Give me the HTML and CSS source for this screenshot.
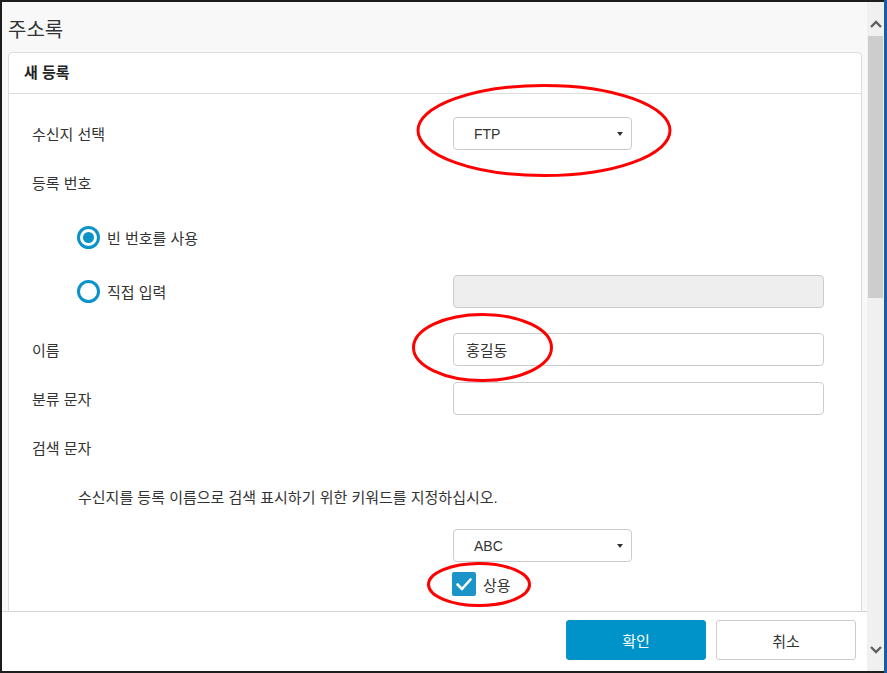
FILE: index.html
```html
<!DOCTYPE html>
<html lang="ko">
<head>
    <meta charset="UTF-8">
    <title>주소록</title>
    <link rel="stylesheet" href="styles.css">
</head>
<body>
    <div class="desktop">
        <div class="window">
            <div class="dialog-main">
                <div class="dialog-title">주소록</div>
                <div class="dialog-body">
                    <div class="card">
                        <div class="card-header">새 등록</div>
                        <div class="card-body">
                            <div class="form-row">
                                <div class="form-label">수신지 선택</div>
                                <div class="select">FTP<span class="caret"></span></div>
                            </div>
                            <div class="form-row">
                                <div class="form-label">등록 번호</div>
                            </div>
                            <div class="radio-group">
                                <div class="form-row">
                                    <div class="form-label radio-option">
                                        <span class="radio checked"></span>빈 번호를 사용
                                    </div>
                                </div>
                                <div class="form-row">
                                    <div class="form-label radio-option">
                                        <span class="radio"></span>직접 입력
                                    </div>
                                    <input class="field" type="text" disabled>
                                </div>
                            </div>
                            <div class="form-row">
                                <div class="form-label">이름</div>
                                <input class="field" type="text" value="홍길동">
                            </div>
                            <div class="form-row">
                                <div class="form-label">분류 문자</div>
                                <input class="field" type="text">
                            </div>
                            <div class="form-row">
                                <div class="form-label">검색 문자</div>
                            </div>
                            <div class="form-row">
                                <div class="form-hint">수신지를 등록 이름으로 검색 표시하기 위한 키워드를 지정하십시오.</div>
                            </div>
                            <div class="form-row tight">
                                <div class="form-label"></div>
                                <div class="select">ABC<span class="caret"></span></div>
                            </div>
                            <div class="form-row check-row">
                                <div class="form-label"></div>
                                <span class="checkbox">
                                    <svg width="24" height="24" viewBox="0 0 24 24"><polyline points="5.5,12.5 10,17 18.5,7.5" fill="none" stroke="#fff" stroke-width="2.6" stroke-linecap="round" stroke-linejoin="round"/></svg>
                                </span>
                                <span class="check-label">상용</span>
                            </div>
                        </div>
                    </div>
                </div>
                <div class="dialog-footer">
                    <button class="btn btn-primary">확인</button>
                    <button class="btn btn-default">취소</button>
                </div>
            </div>
            <div class="scrollbar">
                <div class="scroll-btn up">
                    <svg width="12" height="8" viewBox="0 0 12 8"><polyline points="1,7 6,2 11,7" fill="none" stroke="#5f5f5f" stroke-width="2.4"/></svg>
                </div>
                <div class="scroll-track">
                    <div class="scroll-thumb"></div>
                </div>
                <div class="scroll-btn down">
                    <svg width="12" height="8" viewBox="0 0 12 8"><polyline points="1,1 6,6 11,1" fill="none" stroke="#5f5f5f" stroke-width="2.4"/></svg>
                </div>
            </div>
        </div>
        <svg class="marks" width="887" height="673" viewBox="0 0 887 673">
            <ellipse cx="544" cy="130.5" rx="126" ry="45" fill="none" stroke="#f00" stroke-width="3"/>
            <ellipse cx="482.5" cy="347.5" rx="69" ry="33" fill="none" stroke="#f00" stroke-width="3"/>
            <ellipse cx="479" cy="584.5" rx="50.5" ry="21" fill="none" stroke="#f00" stroke-width="3"/>
        </svg>
    </div>
</body>
</html>
```

FILE: styles.css
```css
body {
    margin: 0;
    background: #1d1d1d;
    font-family: "Liberation Sans", "Noto Sans CJK KR", sans-serif;
    color: #333;
}
.desktop {
    position: relative;
    width: 887px;
    height: 673px;
    overflow: hidden;
    background: linear-gradient(to right, #1d1d1d 884px, #1a5d9e 884px);
}
.window {
    display: flex;
    width: 882px;
    height: 669px;
    margin: 2px 0 0 2px;
    background: #f8f8f8;
}
.dialog-main {
    width: 865px;
    display: flex;
    flex-direction: column;
}
.dialog-title {
    height: 50px;
    box-sizing: border-box;
    padding: 18px 6px 0 6px;
    font-size: 20px;
    line-height: 20px;
    color: #333;
}
.dialog-body {
    flex: 1;
    overflow: hidden;
    padding: 0 5px 0 6px;
}
.card {
    background: #fff;
    border: 1px solid #ddd;
    border-radius: 4px;
    min-height: 640px;
}
.card-header {
    height: 40px;
    line-height: 40px;
    padding: 0 15px;
    font-size: 15px;
    font-weight: bold;
    color: #222;
    border-bottom: 1px solid #ddd;
}
.card-body {
    padding: 23px 37px 0 23px;
}
.form-row {
    display: flex;
    align-items: center;
    height: 33px;
    margin-bottom: 16px;
    font-size: 15px;
}
.form-row.tight {
    margin-bottom: 10px;
}
.form-label {
    width: 421px;
    flex-shrink: 0;
    font-size: 15px;
}
.radio-group {
    padding: 6px 0 9px 0;
    margin-bottom: 16px;
}
.radio-group .form-row {
    margin-bottom: 21px;
}
.radio-group .form-row:last-child {
    margin-bottom: 0;
}
.radio-option {
    display: flex;
    align-items: center;
    box-sizing: border-box;
    padding-left: 45px;
}
.radio {
    width: 23px;
    height: 23px;
    box-sizing: border-box;
    border: 3px solid #0a93c9;
    border-radius: 50%;
    margin-right: 7px;
    display: flex;
    align-items: center;
    justify-content: center;
}
.radio.checked::after {
    content: "";
    width: 11px;
    height: 11px;
    border-radius: 50%;
    background: #0a93c9;
}
.field {
    flex: 1;
    height: 33px;
    box-sizing: border-box;
    border: 1px solid #ccc;
    border-radius: 4px;
    padding: 0 12px;
    font-family: inherit;
    font-size: 15px;
    color: #333;
    background: #fff;
    outline: none;
}
.field:disabled {
    background: #eee;
}
.select {
    width: 179px;
    height: 33px;
    box-sizing: border-box;
    border: 1px solid #ccc;
    border-radius: 4px;
    padding: 0 8px 0 20px;
    display: flex;
    align-items: center;
    justify-content: space-between;
    font-size: 14px;
    color: #333;
}
.caret {
    width: 0;
    height: 0;
    border-top: 4px solid #333;
    border-left: 3.5px solid transparent;
    border-right: 3.5px solid transparent;
}
.form-hint {
    padding-left: 46px;
    font-size: 15px;
}
.check-row {
    height: 24px;
}
.checkbox {
    width: 24px;
    height: 24px;
    border-radius: 2px;
    background: #1a94c9;
    margin-left: -1px;
    margin-right: 7px;
}
.checkbox svg {
    display: block;
}
.dialog-footer {
    height: 60px;
    box-sizing: border-box;
    border-top: 1px solid #d4d4d4;
    background: #fff;
    display: flex;
    justify-content: flex-end;
    gap: 10px;
    padding: 8px 11px 0 0;
}
.btn {
    width: 140px;
    height: 40px;
    border-radius: 3px;
    font-family: inherit;
    font-size: 15px;
    cursor: pointer;
}
.btn-primary {
    background: #0093c9;
    border: 1px solid #0093c9;
    color: #fff;
}
.btn-default {
    background: #fff;
    border: 1px solid #ccc;
    color: #333;
}
.scrollbar {
    width: 17px;
    background: #f0f0f0;
    display: flex;
    flex-direction: column;
}
.scroll-btn {
    height: 34px;
    box-sizing: border-box;
    display: flex;
    justify-content: center;
}
.scroll-btn.up {
    padding-top: 18px;
}
.scroll-btn.down {
    padding-top: 9px;
}
.scroll-btn svg {
    display: block;
}
.scroll-track {
    flex: 1;
}
.scroll-thumb {
    height: 262px;
    margin: 0 1px;
    background: #cdcdcd;
}
.marks {
    position: absolute;
    left: 0;
    top: 0;
    pointer-events: none;
}
```
